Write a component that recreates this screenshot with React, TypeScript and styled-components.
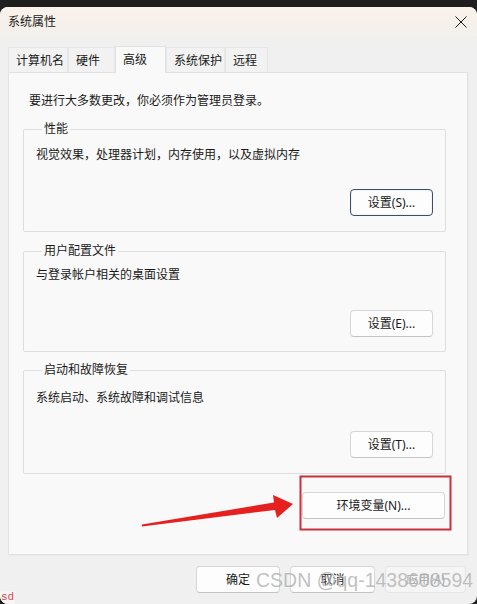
import React from "react";
import styled, { createGlobalStyle } from "styled-components";

const Global = createGlobalStyle`
  html, body { margin: 0; padding: 0; }
  body {
    width: 477px;
    height: 604px;
    overflow: hidden;
    background: #1f1f1f;
    font-family: "Noto Sans", "Noto Sans CJK SC", sans-serif;
    font-size: 12px;
    color: #1a1a1a;
  }
`;

const Window = styled.div`
  position: relative;
  margin-top: 7px;
  width: 477px;
  height: 597px;
  background: #f0f0f0;
  border-radius: 8px;
  display: flex;
  flex-direction: column;
  overflow: hidden;
`;

const TitleBar = styled.div`
  height: 38px;
  flex: none;
  box-sizing: border-box;
  padding: 7px 9px 0 8px;
  display: flex;
  justify-content: space-between;
  align-items: flex-start;
  background: linear-gradient(#faf3ec 0%, #f6f0ea 45%, #f0f0f0 100%);
`;

const Title = styled.span`
  line-height: 16px;
  font-size: 12px;
`;

const CloseBtn = styled.div`
  width: 14px;
  height: 14px;
  margin-top: 1px;
  display: flex;
  align-items: center;
  justify-content: center;
`;

const TabStrip = styled.div`
  height: 27px;
  flex: none;
  display: flex;
  align-items: flex-end;
  padding-left: 8px;
`;

const Tab = styled.div<{ $w: number; $active?: boolean }>`
  box-sizing: border-box;
  width: ${(p) => p.$w}px;
  height: ${(p) => (p.$active ? 27 : 25)}px;
  padding: 4px 0 0 7px;
  line-height: 17px;
  font-size: 12px;
  background: ${(p) => (p.$active ? "#f9f9f9" : "#f2f2f2")};
  border: 1px solid ${(p) => (p.$active ? "#e2e2e2" : "#e6e6e6")};
  border-bottom: none;
  margin-bottom: ${(p) => (p.$active ? "-1px" : "0")};
  position: relative;
  z-index: ${(p) => (p.$active ? 1 : 0)};
`;

const Panel = styled.div`
  flex: none;
  box-sizing: border-box;
  margin: 0 9px 0 8px;
  height: 483px;
  background: #f9f9f9;
  border: 1px solid #e2e2e2;
  box-shadow: 1px 1px 0 #e9e9e9;
  padding: 19px 21px 0 14px;
  display: flex;
  flex-direction: column;
`;

const Intro = styled.div`
  line-height: 17px;
  padding-left: 6px;
`;

const Group = styled.fieldset<{ $top: number; $pb: number }>`
  margin: ${(p) => p.$top}px 0 0 0;
  padding: 0 12px ${(p) => p.$pb}px 12px;
  border: 1px solid #dedede;
  border-radius: 2px;
  display: flex;
  flex-direction: column;
  min-width: 0;
`;

const Legend = styled.legend`
  margin-left: 6px;
  padding: 0 2px;
  line-height: 16px;
  font-size: 12px;
`;

const Desc = styled.div<{ $pt: number }>`
  padding-top: ${(p) => p.$pt}px;
  line-height: 17px;
`;

const ActionRow = styled.div<{ $mt: number }>`
  display: flex;
  justify-content: flex-end;
  margin-top: ${(p) => p.$mt}px;
`;

const Button = styled.button<{ $w: number; $focus?: boolean; $disabled?: boolean }>`
  box-sizing: border-box;
  width: ${(p) => p.$w}px;
  height: 27px;
  flex: none;
  padding: 0;
  font-family: "Noto Sans", "Noto Sans CJK SC", sans-serif;
  font-size: 12px;
  line-height: 17px;
  color: ${(p) => (p.$disabled ? "#a6a6a6" : "#1a1a1a")};
  background: ${(p) => (p.$disabled ? "#f5f5f5" : "#fdfdfd")};
  border: 1px solid ${(p) => (p.$focus ? "#3f4f62" : p.$disabled ? "#e6e6e6" : "#d6d6d6")};
  border-bottom-color: ${(p) => (p.$focus ? "#3f4f62" : p.$disabled ? "#e6e6e6" : "#c4c4c4")};
  border-radius: 4px;
  box-shadow: ${(p) => (p.$focus ? "inset 0 0 0 1px #eef4f8" : "none")};
`;

const EnvRow = styled.div`
  display: flex;
  justify-content: flex-end;
  margin-top: 18px;
  padding-right: 1px;
`;

const Footer = styled.div`
  display: flex;
  justify-content: flex-end;
  gap: 10px;
  padding: 11px 11px 0 0;
`;

const Overlay = styled.svg`
  position: absolute;
  left: 0;
  top: 0;
  pointer-events: none;
`;

const Watermark = styled.div`
  position: absolute;
  left: 256px;
  top: 561px;
  font-family: "Liberation Sans", Arial, sans-serif;
  font-size: 19.5px;
  line-height: 24px;
  color: rgba(130, 130, 130, 0.5);
  text-shadow: 0 0 1px rgba(255, 255, 255, 0.6);
  white-space: nowrap;
  pointer-events: none;
`;

const Stamp = styled.div`
  position: absolute;
  left: 0;
  top: 584px;
  padding: 0 1px;
  font-family: "Liberation Mono", monospace;
  font-size: 11px;
  line-height: 13px;
  color: #d04a4a;
  background: #fbf5f5;
`;

const groups = [
  { title: "性能", desc: "视觉效果，处理器计划，内存使用，以及虚拟内存", btn: "设置(S)...", focus: true, top: 12, pt: 9, mt: 26, pb: 15 },
  { title: "用户配置文件", desc: "与登录帐户相关的桌面设置", btn: "设置(E)...", focus: false, top: 11, pt: 7, mt: 27, pb: 14 },
  { title: "启动和故障恢复", desc: "系统启动、系统故障和调试信息", btn: "设置(T)...", focus: false, top: 10, pt: 11, mt: 25, pb: 15 },
];

const tabs = [
  { label: "计算机名", w: 60 },
  { label: "硬件", w: 47 },
  { label: "高级", w: 51, active: true },
  { label: "系统保护", w: 59 },
  { label: "远程", w: 43 },
];

export default function App() {
  return (
    <>
      <Global />
      <Window>
        <TitleBar>
          <Title>系统属性</Title>
          <CloseBtn>
            <svg width="12" height="12" viewBox="0 0 12 12">
              <path d="M0.5 0.5 L11.5 11.5 M11.5 0.5 L0.5 11.5" stroke="#1a1a1a" strokeWidth="1" />
            </svg>
          </CloseBtn>
        </TitleBar>
        <TabStrip>
          {tabs.map((t) => (
            <Tab key={t.label} $w={t.w} $active={t.active}>
              {t.label}
            </Tab>
          ))}
        </TabStrip>
        <Panel>
          <Intro>要进行大多数更改，你必须作为管理员登录。</Intro>
          {groups.map((g) => (
            <Group key={g.title} $top={g.top} $pb={g.pb}>
              <Legend>{g.title}</Legend>
              <Desc $pt={g.pt}>{g.desc}</Desc>
              <ActionRow $mt={g.mt}>
                <Button $w={83} $focus={g.focus}>{g.btn}</Button>
              </ActionRow>
            </Group>
          ))}
          <EnvRow>
            <Button $w={143}>环境变量(N)...</Button>
          </EnvRow>
        </Panel>
        <Footer>
          <Button $w={84}>确定</Button>
          <Button $w={85}>取消</Button>
          <Button $w={81} $disabled>应用(A)</Button>
        </Footer>
        <Overlay width="477" height="597" viewBox="0 0 477 597">
          <rect x="300.5" y="469.5" width="150" height="53" fill="none" stroke="#c8323c" strokeWidth="2" />
          <polygon points="142,517.5 274,495.5 273,488 293,497 277,511 275,503 142,519.5" fill="#e5201f" />
        </Overlay>
        <Watermark>CSDN @qq-1438608594</Watermark>
        <Stamp>sd</Stamp>
      </Window>
    </>
  );
}
